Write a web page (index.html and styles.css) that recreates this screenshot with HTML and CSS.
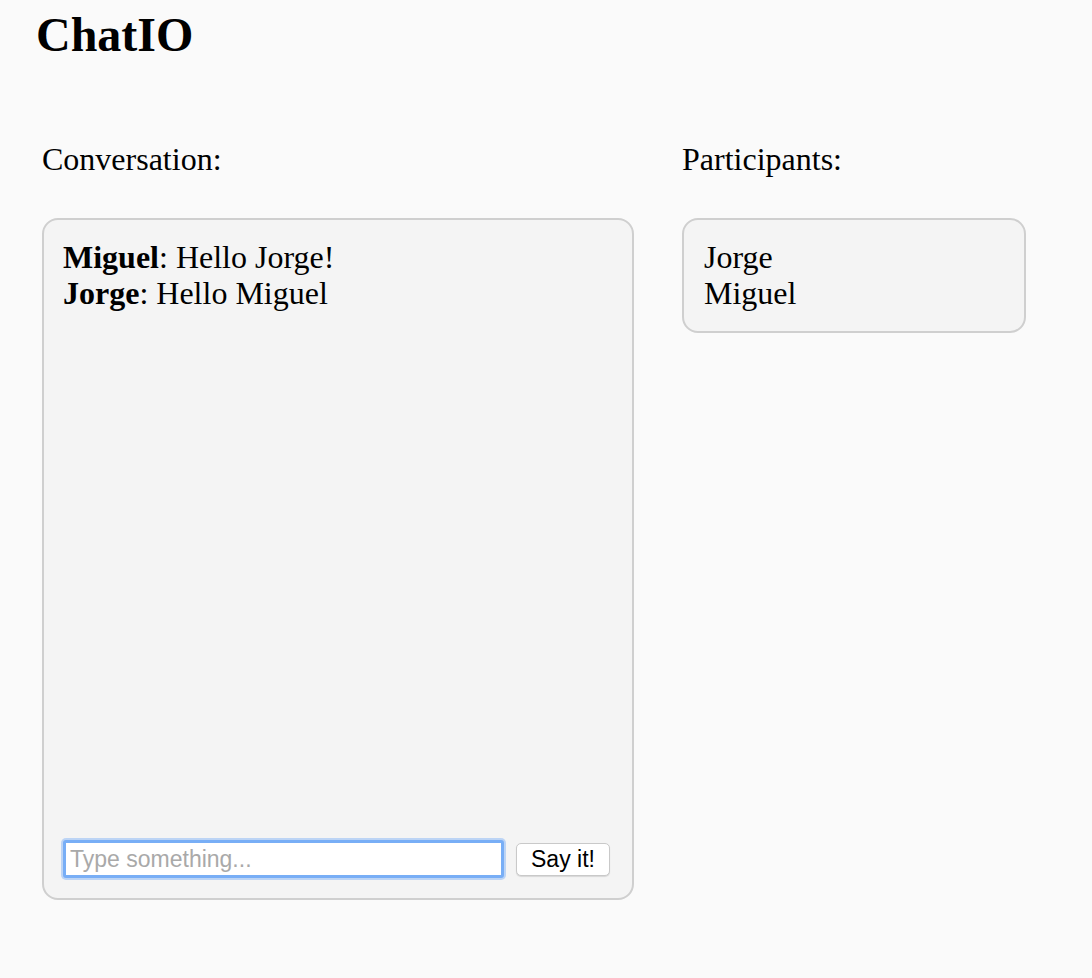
FILE: index.html
```html
<!DOCTYPE html>
<html lang="en">
<head>
<meta charset="utf-8">
<title>ChatIO</title>
<link rel="stylesheet" href="styles.css">
</head>
<body>
<div class="page">
  <h1 class="title">ChatIO</h1>
  <div class="columns">
    <section class="col col-conversation">
      <div class="label">Conversation:</div>
      <div class="panel conversation">
        <div class="messages">
          <div class="message"><b>Miguel</b>: Hello Jorge!</div>
          <div class="message"><b>Jorge</b>: Hello Miguel</div>
        </div>
        <form class="composer">
          <input class="composer-input" type="text" placeholder="Type something...">
          <button class="composer-button" type="button">Say it!</button>
        </form>
      </div>
    </section>
    <section class="col col-participants">
      <div class="label">Participants:</div>
      <div class="panel participants">
        <div class="participant">Jorge</div>
        <div class="participant">Miguel</div>
      </div>
    </section>
  </div>
</div>
</body>
</html>
```

FILE: styles.css
```css
html, body {
  margin: 0;
  padding: 0;
  background: #fafafa;
}

body {
  font-family: "Liberation Serif", "Times New Roman", serif;
  color: #000;
}

.page {
  padding: 7px 0 0 36px;
}

.title {
  margin: 0;
  font-size: 48px;
  line-height: 56px;
  font-weight: bold;
}

.columns {
  display: flex;
  gap: 48px;
  margin-top: 78px;
  padding-left: 6px;
}

.col-conversation {
  width: 592px;
}

.col-participants {
  width: 344px;
}

.label {
  font-size: 32px;
  line-height: 36px;
  margin-bottom: 41px;
}

.panel {
  box-sizing: border-box;
  border: 2px solid #cfcfcf;
  border-radius: 16px;
  background: #f4f4f4;
  font-size: 32px;
  line-height: 36px;
}

.conversation {
  height: 682px;
  padding: 19px 20px 20px 19px;
  display: flex;
  flex-direction: column;
}

.messages {
  flex: 1;
}

.composer {
  display: flex;
  align-items: center;
  gap: 12px;
  margin: 0;
}

.composer-input {
  box-sizing: border-box;
  width: 441px;
  height: 38px;
  margin: 0;
  padding: 1px 4px 0;
  border: 3px solid #78aef6;
  border-radius: 3px;
  box-shadow: 0 0 0 2px rgba(120, 174, 246, 0.45);
  background: #fff;
  font-family: "Liberation Sans", Arial, sans-serif;
  font-size: 23px;
  color: #000;
  outline: none;
}

.composer-input::placeholder {
  color: #a9a9a9;
}

.composer-button {
  box-sizing: border-box;
  width: 94px;
  height: 33px;
  margin: 0;
  padding: 0;
  border: 1px solid #c9c9c9;
  border-radius: 5px;
  background: #fff;
  box-shadow: 0 1px 1px rgba(0, 0, 0, 0.12);
  font-family: "Liberation Sans", Arial, sans-serif;
  font-size: 23px;
  color: #000;
}

.participants {
  padding: 19px 20px 20px;
}
```
